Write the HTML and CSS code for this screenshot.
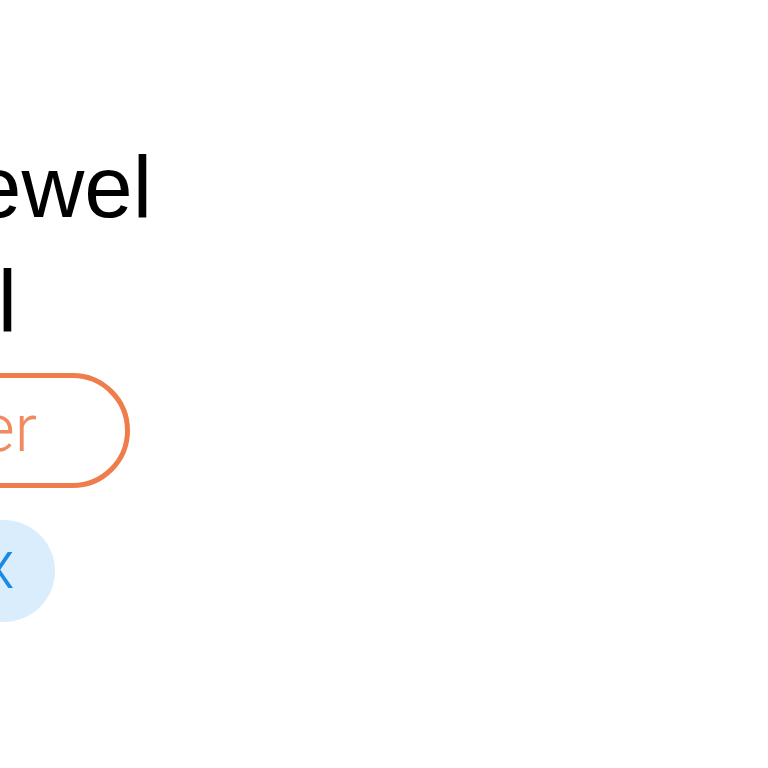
FILE: index.html
```html
<!DOCTYPE html>
<html lang="en">
<head>
<meta charset="utf-8">
<title>Jewel</title>
<link rel="stylesheet" href="styles.css">
</head>
<body>
<main class="stack">
  <h1 class="title">
    <span class="title-line line-one">Jewel</span>
    <span class="title-line line-two">Pearl</span>
  </h1>
  <div class="row row-button">
    <button class="pill" type="button">Order</button>
  </div>
  <div class="row row-close">
    <button class="close" type="button" aria-label="Close">x</button>
  </div>
</main>
</body>
</html>
```

FILE: styles.css
```css
html, body {
  margin: 0;
  padding: 0;
  background: #ffffff;
  overflow: hidden;
}

body {
  font-family: "Liberation Sans", Arial, sans-serif;
  color: #000000;
}

.stack {
  display: flex;
  flex-direction: column;
  padding-top: 130px;
}

.title {
  margin: 0;
  font-weight: 400;
  font-size: 87px;
  line-height: 114px;
  display: flex;
  flex-direction: column;
}

.title-line {
  display: flex;
  justify-content: flex-end;
  white-space: nowrap;
}

.line-one {
  width: 152px;
}

.line-two {
  width: 17px;
}

.row {
  display: flex;
  justify-content: flex-end;
}

.row-button {
  width: 130px;
  margin-top: 15px;
}

.pill {
  flex: none;
  box-sizing: border-box;
  height: 115px;
  border: 5px solid #ef7d4c;
  border-radius: 58px;
  background: #ffffff;
  color: #f08a5f;
  font-family: Roboto, "Liberation Sans", sans-serif;
  font-weight: 300;
  font-size: 66px;
  line-height: 66px;
  padding: 0 88px 4px 88px;
  white-space: nowrap;
  display: flex;
  align-items: center;
}

.row-close {
  width: 55px;
  margin-top: 32px;
}

.close {
  flex: none;
  width: 102px;
  height: 102px;
  border: none;
  border-radius: 50%;
  background: #d9edfd;
  color: #1b8ae5;
  font-family: Roboto, "Liberation Sans", sans-serif;
  font-weight: 300;
  font-size: 68px;
  line-height: 68px;
  padding: 0 12px 12px 0;
  display: flex;
  align-items: center;
  justify-content: center;
}
```
